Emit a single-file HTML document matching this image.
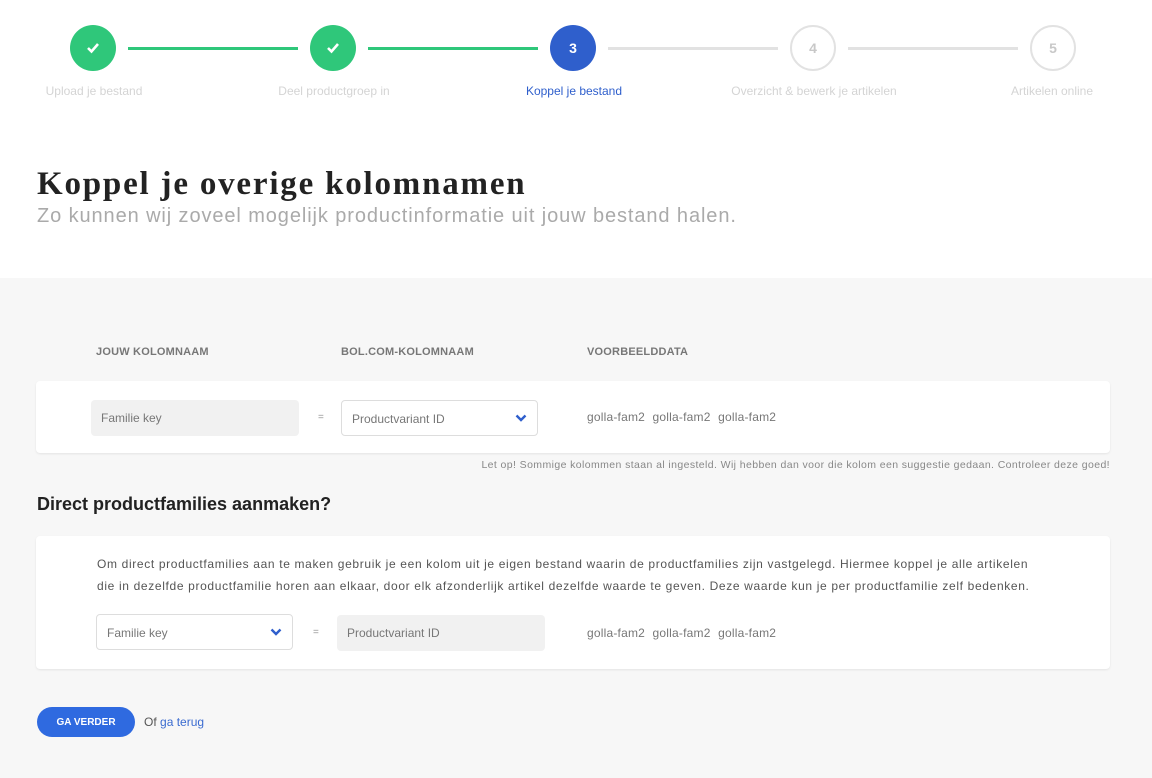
<!DOCTYPE html>
<html><head><meta charset="utf-8"><style>
*{margin:0;padding:0;box-sizing:border-box}
body{width:1152px;height:778px;overflow:hidden;background:#fff;font-family:"Liberation Sans",sans-serif;color:#333;position:relative}
.abs{position:absolute}
.c{position:absolute;width:46px;height:46px;border-radius:50%;top:25px;display:flex;align-items:center;justify-content:center;font-size:14px;font-weight:bold}
.g{background:#2fc77a;color:#fff}
.b{background:#2f5fcc;color:#fff}
.e{border:2px solid #e2e2e2;color:#c8c8c8;background:#fff}
.ln{position:absolute;top:47px;height:3px;width:170px}
.lbl{position:absolute;top:84px;font-size:12px;color:#d4d4d4;width:200px;text-align:center}
.gray{position:absolute;left:0;top:278px;width:1152px;height:500px;background:#f7f7f7}
.card{position:absolute;left:36px;width:1074px;background:#fff;border-radius:4px;box-shadow:0 1px 2px rgba(0,0,0,.08)}
.hd{position:absolute;top:346px;font-size:11px;font-weight:bold;color:#777;letter-spacing:.2px}
.fld{position:absolute;height:36px;border-radius:4px;font-size:12px;color:#777;padding:0 10px;line-height:36px}
.ro{background:#f1f1f1}
.sel{background:#fff;border:1px solid #ddd}
.sel svg{position:absolute;right:10px;top:13px}
.eq{position:absolute;font-size:10px;color:#999}
.dat{position:absolute;font-size:12px;color:#777;word-spacing:4px;letter-spacing:.2px}
</style></head><body>
<div class="ln" style="left:128px;background:#2fc77a"></div>
<div class="ln" style="left:368px;background:#2fc77a"></div>
<div class="ln" style="left:608px;background:#e2e2e2"></div>
<div class="ln" style="left:848px;background:#e2e2e2"></div>
<div class="c g" style="left:70px"><svg width="14" height="12" viewBox="0 0 14 12"><path d="M2 6l3.5 3.5L12 2" stroke="#fff" stroke-width="2.6" fill="none"/></svg></div>
<div class="c g" style="left:310px"><svg width="14" height="12" viewBox="0 0 14 12"><path d="M2 6l3.5 3.5L12 2" stroke="#fff" stroke-width="2.6" fill="none"/></svg></div>
<div class="c b" style="left:550px">3</div>
<div class="c e" style="left:790px">4</div>
<div class="c e" style="left:1030px">5</div>
<div class="lbl" style="left:-6px">Upload je bestand</div>
<div class="lbl" style="left:234px">Deel productgroep in</div>
<div class="lbl" style="left:474px;color:#2f5fcc">Koppel je bestand</div>
<div class="lbl" style="left:714px">Overzicht &amp; bewerk je artikelen</div>
<div class="lbl" style="left:952px">Artikelen online</div>
<div class="abs" style="left:37px;top:166px;font-family:'Liberation Serif',serif;font-weight:bold;font-size:33px;letter-spacing:1.8px;color:#222">Koppel je overige kolomnamen</div>
<div class="abs" style="left:37px;top:205px;font-size:20px;letter-spacing:.9px;color:#aaa">Zo kunnen wij zoveel mogelijk productinformatie uit jouw bestand halen.</div>
<div class="gray"></div>
<div class="hd" style="left:96px">JOUW KOLOMNAAM</div>
<div class="hd" style="left:341px">BOL.COM-KOLOMNAAM</div>
<div class="hd" style="left:587px">VOORBEELDDATA</div>
<div class="card" style="top:381px;height:72px"></div>
<div class="fld ro" style="left:91px;top:400px;width:208px">Familie key</div>
<div class="eq" style="left:318px;top:412px">=</div>
<div class="fld sel" style="left:341px;top:400px;width:197px">Productvariant ID<svg width="12" height="8" viewBox="0 0 12 8"><path d="M1.5 1.5L6 6l4.5-4.5" stroke="#2f5fcc" stroke-width="2.4" fill="none"/></svg></div>
<div class="dat" style="left:587px;top:410px">golla-fam2 golla-fam2 golla-fam2</div>
<div class="abs" style="right:42px;top:459px;font-size:10.5px;letter-spacing:.4px;color:#888">Let op! Sommige kolommen staan al ingesteld. Wij hebben dan voor die kolom een suggestie gedaan. Controleer deze goed!</div>
<div class="abs" style="left:37px;top:494px;font-size:18px;font-weight:bold;color:#222">Direct productfamilies aanmaken?</div>
<div class="card" style="top:536px;height:133px"></div>
<div class="abs" style="left:97px;top:553px;font-size:12px;letter-spacing:.65px;color:#555;line-height:22px;width:1000px">Om direct productfamilies aan te maken gebruik je een kolom uit je eigen bestand waarin de productfamilies zijn vastgelegd. Hiermee koppel je alle artikelen<br>die in dezelfde productfamilie horen aan elkaar, door elk afzonderlijk artikel dezelfde waarde te geven. Deze waarde kun je per productfamilie zelf bedenken.</div>
<div class="fld sel" style="left:96px;top:614px;width:197px">Familie key<svg width="12" height="8" viewBox="0 0 12 8"><path d="M1.5 1.5L6 6l4.5-4.5" stroke="#2f5fcc" stroke-width="2.4" fill="none"/></svg></div>
<div class="eq" style="left:313px;top:627px">=</div>
<div class="fld ro" style="left:337px;top:615px;width:208px">Productvariant ID</div>
<div class="dat" style="left:587px;top:626px">golla-fam2 golla-fam2 golla-fam2</div>
<div class="abs" style="left:37px;top:707px;width:98px;height:30px;border-radius:15px;background:#2f6ae0;color:#fff;font-size:10px;font-weight:bold;display:flex;align-items:center;justify-content:center">GA VERDER</div>
<div class="abs" style="left:144px;top:715px;font-size:12px;color:#555">Of <span style="color:#3a6bd0">ga terug</span></div>
</body></html>
